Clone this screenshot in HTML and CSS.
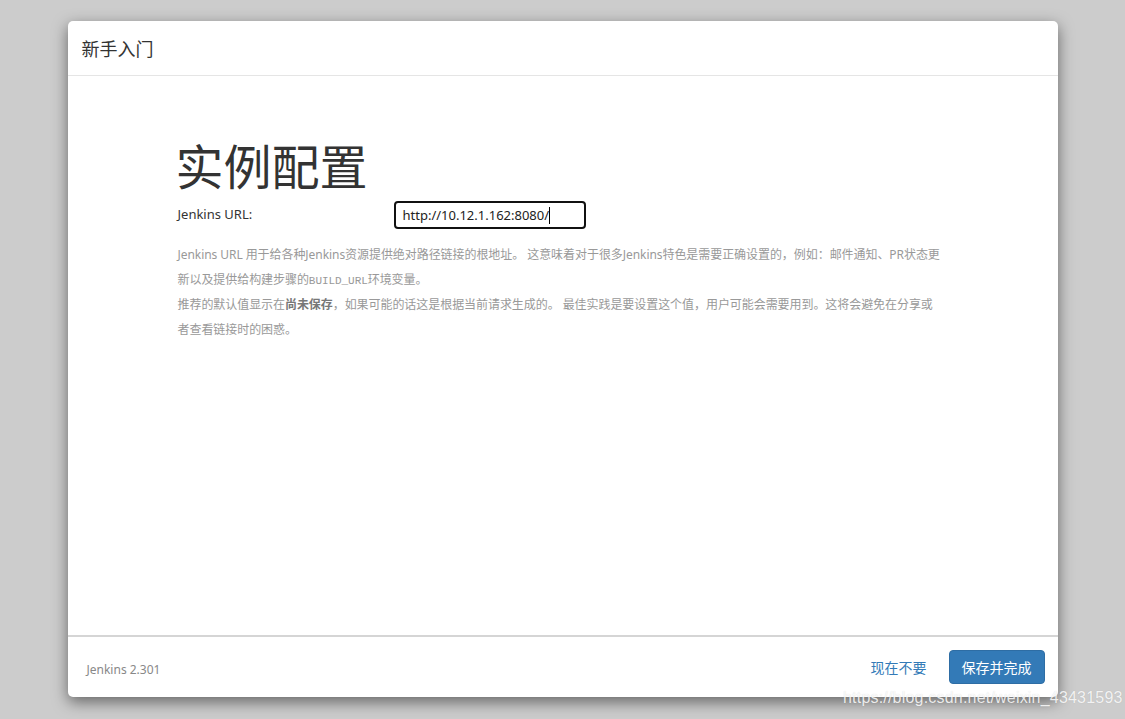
FILE: index.html
```html
<!DOCTYPE html>
<html lang="zh">
<head>
<meta charset="utf-8">
<title>新手入门</title>
<link rel="stylesheet" href="styles.css">
</head>
<body>
<div class="modal">
  <div class="modal-header">新手入门</div>
  <div class="modal-body">
    <div class="content">
      <h1 class="title">实例配置</h1>
      <div class="form-row">
        <label class="label">Jenkins URL:</label>
        <div class="input">http://10.12.1.162:8080/<span class="caret"></span></div>
      </div>
      <div class="desc">
        <p>Jenkins URL 用于给各种Jenkins资源提供绝对路径链接的根地址。 这意味着对于很多Jenkins特色是需要正确设置的，例如：邮件通知、PR状态更新以及提供给构建步骤的<code>BUILD_URL</code>环境变量。</p>
        <p>推荐的默认值显示在<strong>尚未保存</strong>，如果可能的话这是根据当前请求生成的。 最佳实践是要设置这个值，用户可能会需要用到。这将会避免在分享或者查看链接时的困惑。</p>
      </div>
    </div>
  </div>
  <div class="modal-footer">
    <span class="version">Jenkins 2.301</span>
    <div class="actions">
      <a class="link">现在不要</a>
      <button class="btn">保存并完成</button>
    </div>
  </div>
</div>
<div class="watermark">https://blog.csdn.net/weixin_43431593</div>
</body>
</html>
```
FILE: styles.css
```css
html, body {
  margin: 0;
  padding: 0;
  background: #cccccc;
  height: 100%;
  font-family: "Noto Sans", "Noto Sans CJK SC", sans-serif;
  color: #333;
}
.modal {
  width: 990px;
  height: 676px;
  margin: 21px auto 0 auto;
  background: #fff;
  border-radius: 5px;
  box-shadow: 0 5px 15px rgba(0,0,0,0.5);
  display: flex;
  flex-direction: column;
  overflow: hidden;
}
.modal-header {
  height: 55px;
  box-sizing: border-box;
  border-bottom: 1px solid #e5e5e5;
  padding: 0 14px;
  display: flex;
  align-items: center;
  font-family: "Noto Sans CJK SC", sans-serif;
  font-size: 18px;
  color: #333;
}
.modal-body {
  flex: 1;
}
.content {
  width: 770px;
  margin: 0 auto;
  padding-top: 62px;
}
.title {
  margin: 0 0 0 -2px;
  font-family: "Noto Sans CJK SC", sans-serif;
  font-weight: 400;
  font-size: 48px;
  line-height: 53px;
  color: #333;
}
.form-row {
  display: grid;
  grid-template-columns: 216px 192px;
  align-items: center;
  margin-top: 10px;
}
.label {
  font-size: 13px;
  color: #333;
  margin-top: -2px;
}
.input {
  height: 28px;
  box-sizing: border-box;
  border: 2px solid #111;
  border-radius: 4px;
  padding: 0 7px;
  font-size: 13px;
  line-height: 24px;
  color: #222;
  display: flex;
  align-items: center;
}
.caret {
  display: inline-block;
  width: 1px;
  height: 17px;
  background: #000;
}
.desc {
  width: 765px;
  margin-top: 13px;
  font-size: 12px;
  line-height: 25px;
  color: #999;
  letter-spacing: -0.06px;
  font-family: "Noto Sans", "Noto Sans CJK SC", sans-serif;
}
.desc p {
  margin: 0;
}
.desc strong {
  color: #777;
  font-weight: 700;
  line-height: 1;
}
.desc code {
  font-family: "Liberation Mono", "DejaVu Sans Mono", monospace;
  font-size: 11px;
  line-height: 1;
  color: #999;
}
.modal-footer {
  height: 62px;
  box-sizing: border-box;
  border-top: 2px solid #d5d5d5;
  display: flex;
  align-items: center;
  justify-content: space-between;
  padding: 0 13px 0 19px;
}
.version {
  font-size: 12px;
  color: #888;
  margin-top: 4px;
}
.actions {
  display: flex;
  align-items: center;
  gap: 22px;
}
.link {
  color: #337ab7;
  font-size: 14px;
  font-family: "Noto Sans CJK SC", sans-serif;
  cursor: pointer;
}
.btn {
  height: 34px;
  width: 96px;
  background: #337ab7;
  border: 1px solid #2e6da4;
  border-radius: 4px;
  color: #fff;
  font-family: "Noto Sans CJK SC", sans-serif;
  font-size: 14px;
  padding: 0;
}
.watermark {
  position: absolute;
  left: 843px;
  top: 689px;
  font-family: "Liberation Sans", Arial, sans-serif;
  font-size: 16px;
  color: rgba(255,255,255,0.85);
  text-shadow: 0 0 1px rgba(0,0,0,0.15);
  letter-spacing: 0.2px;
}
```
